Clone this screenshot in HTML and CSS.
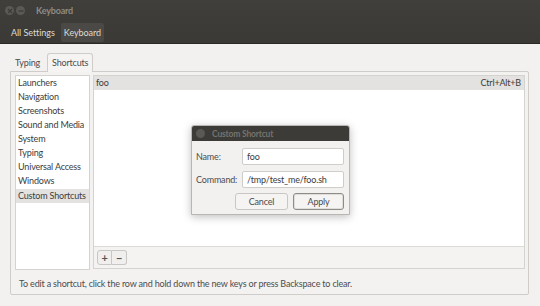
FILE: index.html
```html
<!DOCTYPE html>
<html>
<head>
<meta charset="utf-8">
<link rel="stylesheet" href="styles.css">
</head>
<body>
<div class="window">
  <header class="header">
    <div class="titlebar">
      <span class="wbtn"><svg width="8" height="8" viewBox="0 0 8 8"><path d="M2 2L6 6M6 2L2 6" stroke="#3c3b37" stroke-width="1.2"/></svg></span>
      <span class="wbtn"><svg width="8" height="8" viewBox="0 0 8 8"><path d="M1.5 4H6.5" stroke="#3c3b37" stroke-width="1.2"/></svg></span>
      <span class="wtitle">Keyboard</span>
    </div>
    <div class="toolbar">
      <span class="crumb">All Settings</span>
      <span class="crumb active">Keyboard</span>
    </div>
  </header>
  <main class="content">
    <div class="tabs">
      <span class="tab">Typing</span>
      <span class="tab current">Shortcuts</span>
    </div>
    <section class="panel">
      <div class="lists">
        <ul class="sidebar">
          <li>Launchers</li>
          <li>Navigation</li>
          <li>Screenshots</li>
          <li>Sound and Media</li>
          <li>System</li>
          <li>Typing</li>
          <li>Universal Access</li>
          <li>Windows</li>
          <li class="sel">Custom Shortcuts</li>
        </ul>
        <div class="shortcuts">
          <div class="view">
            <div class="row sel"><span>foo</span><span>Ctrl+Alt+B</span></div>
          </div>
          <div class="listbar">
            <span class="lbtn">+</span><span class="lbtn">−</span>
          </div>
        </div>
      </div>
      <p class="hint">To edit a shortcut, click the row and hold down the new keys or press Backspace to clear.</p>
    </section>
  </main>
  <div class="dialog">
    <div class="dtitle"><span class="dicon"></span><span>Custom Shortcut</span></div>
    <div class="dbody">
      <div class="field"><label>Name:</label><span class="entry">foo</span></div>
      <div class="field"><label>Command:</label><span class="entry">/tmp/test_me/foo.sh</span></div>
      <div class="actions"><span class="btn">Cancel</span><span class="btn default">Apply</span></div>
    </div>
  </div>
</div>
</body>
</html>
```
FILE: styles.css
```css
* { box-sizing: border-box; }
html, body { margin: 0; padding: 0; }
body {
  width: 540px; height: 306px; overflow: hidden;
  background: #f2f1f0;
  font-family: Lato, "Open Sans", sans-serif;
  font-size: 9px;
  letter-spacing: -0.18px;
  color: #3c3c3c;
}
.window { position: relative; width: 540px; height: 306px; }
.header {
  height: 44px;
  background: linear-gradient(#403f3b, #3a3935);
  border-bottom: 1px solid #2a2926;
}
.titlebar { height: 21px; display: flex; align-items: center; padding-left: 4px; }
.wbtn {
  width: 9px; height: 9px; border-radius: 50%;
  background: #5a5955; margin-right: 1px;
  display: flex; align-items: center; justify-content: center;
  margin-left: 1px;
}
.wtitle { margin-left: 10px; color: #8d8b85; font-weight: bold; font-size: 9px; }
.toolbar { height: 22px; display: flex; align-items: center; padding-left: 8px; gap: 3px; }
.crumb { color: #dfdbd2; padding: 3px 3px; font-size: 9px; letter-spacing: -0.05px; }
.crumb.active { background: #4a4945; border-radius: 2px; padding: 4px 3px; }
.content { padding: 10px 11px 0 10px; }
.tabs { display: flex; align-items: flex-end; height: 17px; padding-left: 4px; gap: 6px; }
.tab { padding: 0 1px 3px; color: #4c4c4c; }
.tab.current {
  background: #f5f4f3; border: 1px solid #cfcdca; border-bottom: none;
  border-radius: 3px 3px 0 0; padding: 3px 4px 4px;
  position: relative; top: 1px;
}
.panel {
  height: 224px;
  border: 1px solid #cfcdca; border-radius: 0 2px 2px 2px;
  background: #f3f2f1;
  padding: 3px 3px 0 4px;
}
.lists { display: flex; gap: 3px; height: 195px; }
.sidebar {
  list-style: none; margin: 0; padding: 0;
  width: 75px; height: 195px;
  background: #fff; border: 1px solid #d5d3d0;
}
.sidebar li { height: 14px; line-height: 14px; padding-left: 2px; white-space: nowrap; color: #3c3c3c; }
.sidebar li.sel { background: #e3e2e0; margin-top: 1px; }
.shortcuts {
  flex: 1; height: 194px; border: 1px solid #d5d3d0;
  display: flex; flex-direction: column; background: #f4f3f2;
}
.view { flex: 1; background: #fff; border-bottom: 1px solid #dcdad7; }
.row { display: flex; justify-content: space-between; height: 14px; line-height: 14px; padding: 0 3px 0 2px; }
.row.sel { background: #e3e2e0; }
.listbar { height: 21px; display: flex; align-items: center; padding-left: 3px; }
.lbtn {
  width: 15px; height: 15px; display: flex; align-items: center; justify-content: center;
  border: 1px solid #c9c7c4; background: #f0efee; font-size: 11px; font-weight: bold; color: #555;
}
.lbtn:first-child { border-radius: 3px 0 0 3px; }
.lbtn + .lbtn { border-left: none; border-radius: 0 3px 3px 0; }
.hint { margin: 0; padding: 8px 0 0 4px; color: #4c4c4c; white-space: nowrap; }
.dialog {
  position: absolute; left: 191px; top: 125px; width: 159px; height: 90px;
  background: #f2f1f0; border: 1px solid #b8b6b2;
  border-radius: 3px 3px 0 0;
  box-shadow: 0 2px 8px rgba(0,0,0,0.25);
}
.dtitle {
  height: 15px; background: #3c3b37; display: flex; align-items: center;
  border-radius: 2px 2px 0 0; color: #75736e; font-weight: bold; font-size: 8.5px; padding-left: 4px; gap: 7px;
}
.dicon { width: 9px; height: 9px; border-radius: 50%; background: #5a5955; }
.dbody { padding: 7px 5px 0 4px; }
.field { display: flex; align-items: center; height: 17px; margin-bottom: 6px; }
.field label { width: 46px; color: #4c4c4c; }
.entry {
  flex: 1; height: 17px; line-height: 15px; background: #fff;
  border: 1px solid #cfcdca; border-radius: 2px; padding-left: 4px; color: #3c3c3c;
}
.actions { display: flex; justify-content: flex-end; gap: 5px; margin-top: -1px; }
.btn {
  width: 53px; height: 17px; line-height: 15px; text-align: center;
  border: 1px solid #c9c7c4; border-radius: 3px; background: #f5f4f3; color: #4c4c4c;
}
.btn.default { width: 51px; border: 1px solid #8e8c88; box-shadow: inset 0 0 0 1px #e0dedb; }
```
